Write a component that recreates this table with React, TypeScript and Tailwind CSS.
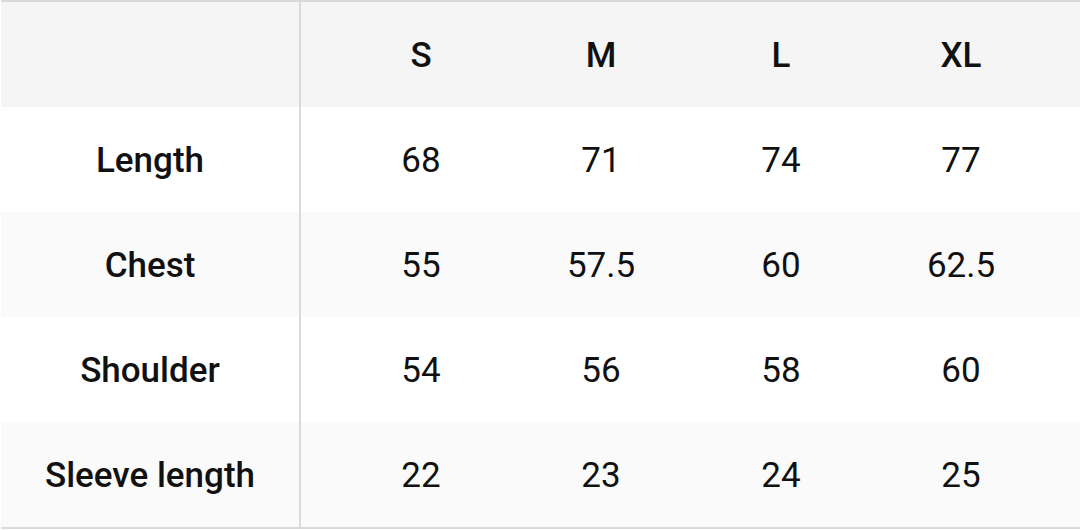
import React from 'react';

const sizes = ['S', 'M', 'L', 'XL'];

const rows = [
  { label: 'Length', values: ['68', '71', '74', '77'], bg: 'bg-white' },
  { label: 'Chest', values: ['55', '57.5', '60', '62.5'], bg: 'bg-[#fafafa]' },
  { label: 'Shoulder', values: ['54', '56', '58', '60'], bg: 'bg-white' },
  { label: 'Sleeve length', values: ['22', '23', '24', '25'], bg: 'bg-[#fafafa]' },
];

const Row = ({
  label,
  values,
  bg,
  bold,
}: {
  label: string;
  values: string[];
  bg: string;
  bold?: boolean;
}) => (
  <div className={`flex h-[105px] ${bg}`}>
    <div className="flex w-[300px] shrink-0 items-center justify-center border-r-2 border-[#dadada] pt-[4px] font-medium">
      {label}
    </div>
    <div className="flex flex-1 pl-[30px]">
      {values.map((v, i) => (
        <div
          key={i}
          className={`flex w-[180px] items-center justify-center pt-[4px] ${bold ? 'font-medium' : 'font-normal'}`}
        >
          {v}
        </div>
      ))}
    </div>
  </div>
);

export default function App() {
  return (
    <div
      className="h-[530px] w-[1080px] overflow-hidden bg-white pl-px text-[35px] text-[#111]"
      style={{ fontFamily: 'Roboto, "Liberation Sans", sans-serif' }}
    >
      <div className="flex flex-col border-y-2 border-[#dadada]">
        <Row label="" values={sizes} bg="bg-[#f5f5f5]" bold />
        {rows.map((r) => (
          <Row key={r.label} {...r} />
        ))}
      </div>
    </div>
  );
}
